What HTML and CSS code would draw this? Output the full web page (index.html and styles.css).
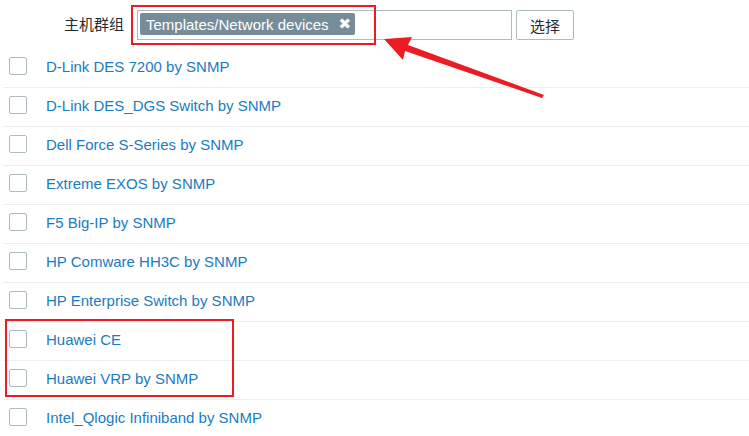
FILE: index.html
```html
<!DOCTYPE html>
<html>
<head>
<meta charset="utf-8">
<link rel="stylesheet" href="styles.css">
</head>
<body>
<div class="page">
  <div class="form-row">
    <label class="form-label">主机群组</label>
    <div class="multiselect">
      <span class="tag">Templates/Network devices<span class="tag-x">✖</span></span>
    </div>
    <button class="btn">选择</button>
  </div>
  <ul class="list">
    <li class="row"><span class="cb"></span><a class="link">D-Link DES 7200 by SNMP</a></li>
    <li class="row"><span class="cb"></span><a class="link">D-Link DES_DGS Switch by SNMP</a></li>
    <li class="row"><span class="cb"></span><a class="link">Dell Force S-Series by SNMP</a></li>
    <li class="row"><span class="cb"></span><a class="link">Extreme EXOS by SNMP</a></li>
    <li class="row"><span class="cb"></span><a class="link">F5 Big-IP by SNMP</a></li>
    <li class="row"><span class="cb"></span><a class="link">HP Comware HH3C by SNMP</a></li>
    <li class="row"><span class="cb"></span><a class="link">HP Enterprise Switch by SNMP</a></li>
    <li class="row"><span class="cb"></span><a class="link">Huawei CE</a></li>
    <li class="row"><span class="cb"></span><a class="link">Huawei VRP by SNMP</a></li>
    <li class="row"><span class="cb"></span><a class="link">Intel_Qlogic Infiniband by SNMP</a></li>
  </ul>
  <div class="mark mark-top"></div>
  <div class="mark mark-huawei"></div>
  <svg class="arrow" width="749" height="436" viewBox="0 0 749 436">
    <polygon points="384,39 412,37 408,45 544,95 542,98 405,51 403,60" fill="#ec1c24"/>
  </svg>
</div>
</body>
</html>
```
FILE: styles.css
```css
html, body {
  margin: 0;
  padding: 0;
  background: #ffffff;
}
.page {
  position: relative;
  width: 749px;
  height: 436px;
  overflow: hidden;
  font-family: Arial, "Liberation Sans", "Noto Sans CJK SC", sans-serif;
  font-size: 14px;
  color: #1f2c33;
}
.form-row {
  display: flex;
  align-items: flex-start;
  height: 49px;
  padding-top: 10px;
  box-sizing: border-box;
}
.form-label {
  width: 137px;
  padding-right: 13px;
  box-sizing: border-box;
  text-align: right;
  line-height: 28px;
  font-family: "Noto Sans CJK SC", sans-serif;
  font-size: 15px;
  color: #1f2c33;
}
.multiselect {
  width: 375px;
  height: 30px;
  border: 1px solid #acbbc2;
  box-sizing: border-box;
  padding: 2px 2px;
  display: flex;
  align-items: flex-start;
}
.tag {
  display: inline-flex;
  align-items: center;
  height: 22px;
  padding: 0 4px 0 6px;
  background: #768d99;
  color: #ffffff;
  border-radius: 2px;
  font-size: 15px;
  white-space: nowrap;
}
.tag-x {
  margin-left: 10px;
  font-size: 15px;
  line-height: 1;
  font-family: "DejaVu Sans", sans-serif;
}
.btn {
  margin-left: 4px;
  width: 58px;
  height: 30px;
  border: 1px solid #acbbc2;
  border-radius: 2px;
  background: #ffffff;
  font-family: "Noto Sans CJK SC", sans-serif;
  font-size: 15px;
  color: #1f2c33;
  padding: 0;
}
.list {
  list-style: none;
  margin: 0 0 0 3px;
  padding: 0;
}
.row {
  display: flex;
  align-items: flex-start;
  height: 39px;
  box-sizing: border-box;
  border-bottom: 1px solid #ebeef0;
  padding: 8px 0 0 6px;
}
.cb {
  width: 18px;
  height: 18px;
  box-sizing: border-box;
  border: 1px solid #acbbc2;
  border-radius: 2px;
  flex: none;
}
.link {
  margin-left: 19px;
  line-height: 20px;
  font-size: 15px;
  color: #1a7bbf;
  white-space: nowrap;
}
.mark {
  position: absolute;
  border: 2.5px solid #ec1c24;
  box-sizing: border-box;
}
.mark-top {
  left: 131px;
  top: 5px;
  width: 245px;
  height: 40px;
}
.mark-huawei {
  left: 5px;
  top: 319px;
  width: 229px;
  height: 78px;
}
.arrow {
  position: absolute;
  left: 0;
  top: 0;
}
```
